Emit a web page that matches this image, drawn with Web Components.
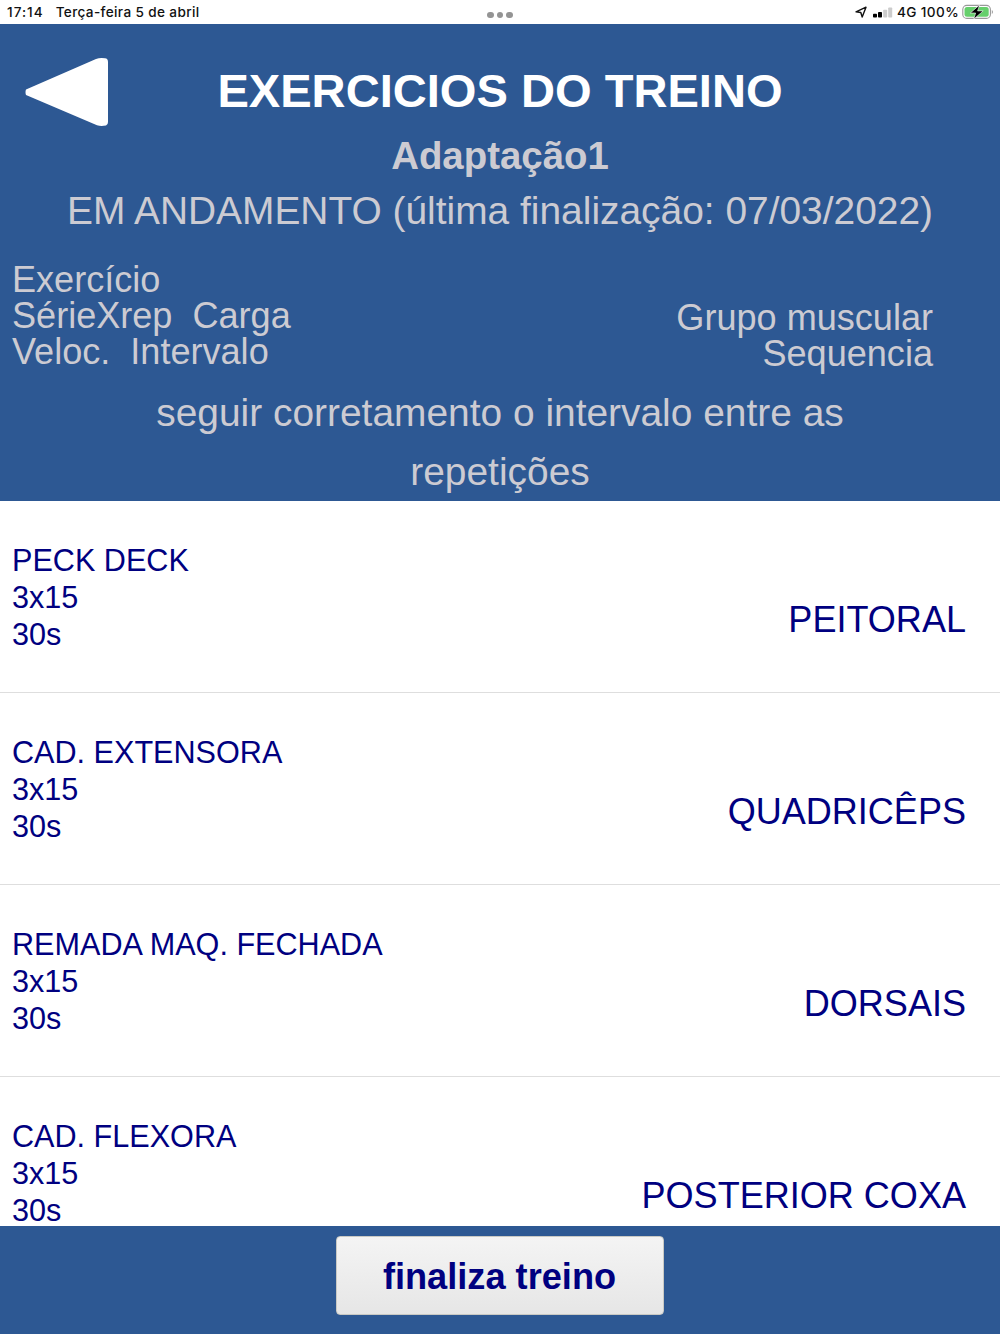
<!DOCTYPE html>
<html lang="pt-BR">
<head>
  <meta charset="UTF-8">
  <title>Exercicios do treino</title>
  <style>
    body {
      margin: 0;
      height: 1334px;
      overflow: hidden;
      background: #fff;
      font-family: "Liberation Sans", Arial, sans-serif;
    }
  </style>
</head>
<body>
  <treino-app></treino-app>

  <script>
    // Cria o shadow DOM a partir de uma string
    function render(el, html) {
      const template = document.createElement('template');
      template.innerHTML = html;
      el.attachShadow({ mode: 'open' });
      el.shadowRoot.appendChild(template.content.cloneNode(true));
    }

    class StatusBar extends HTMLElement {
      constructor() {
        super();
        render(this, `
          <style>
            :host {
              display: grid;
              grid-template-columns: 1fr auto 1fr;
              align-items: center;
              box-sizing: border-box;
              height: 24px;
              padding: 0 7px;
              background: #fff;
              color: #111;
              font: 500 13.6px/24px Inter, sans-serif;
              letter-spacing: .36px;
            }
            .left, .right, .dots { display: flex; align-items: center; }
            .left { gap: 12px; }
            .hora { letter-spacing: 1px; }
            .right { justify-content: flex-end; }
            .dots { gap: 3.4px; padding-top: 6px; }
            .dots i { width: 6.2px; height: 6.2px; border-radius: 50%; background: #949494; }
            .net { margin-left: 4px; }
            .pct { margin: 0 3px 0 4px; }
            svg { display: block; }
            .battery { margin-right: -1px; }
          </style>
          <div class="left"><span class="hora">17:14</span><span>Terça-feira 5 de abril</span></div>
          <div class="dots"><i></i><i></i><i></i></div>
          <div class="right">
            <svg width="12" height="12" viewBox="0 0 12 12"><path d="M1 5.9 11 1.2 7.2 11 5.8 6.5Z" fill="none" stroke="#111" stroke-width="1.4" stroke-linejoin="round"/></svg>
            <svg width="21" height="12" viewBox="0 0 21 12" style="margin-left:5px">
              <rect x="1" y="7.8" width="4" height="3.7" rx=".8" fill="#000"/>
              <rect x="6" y="6" width="4" height="5.5" rx=".8" fill="#000"/>
              <rect x="11.2" y="3.7" width="4" height="7.8" rx=".8" fill="#ccc"/>
              <rect x="16.2" y="1.5" width="4" height="10" rx=".8" fill="#ccc"/>
            </svg>
            <span class="net">4G</span>
            <span class="pct">100%</span>
            <svg class="battery" width="32" height="16" viewBox="0 0 32 16">
              <rect x=".8" y="1.4" width="27.6" height="13" rx="4" fill="#fff" stroke="#999" stroke-width="1.1"/>
              <rect x="2.5" y="3.1" width="24.2" height="9.6" rx="2.5" fill="#65cf6b"/>
              <path d="M29.8 6c1.5.6 1.5 3.4 0 4Z" fill="#999"/>
              <path d="M17.6 .9 8.3 9h5.3L11.8 15.1l9.4-8.2h-5.6Z" fill="#000" stroke="#fff" stroke-width=".6"/>
            </svg>
          </div>
        `);
      }
    }
    customElements.define('status-bar', StatusBar);

    class TreinoHeader extends HTMLElement {
      constructor() {
        super();
        render(this, `
          <style>
            :host {
              display: block;
              box-sizing: border-box;
              height: 477px;
              padding-top: 34px;
              background: #2d5893;
              color: #cccbd2;
              font-size: 38.9px;
              text-align: center;
            }
            .top {
              display: grid;
              grid-template-columns: 110px 1fr 110px;
              height: 70px;
            }
            .top svg { display: block; margin-left: 25px; }
            h1 {
              margin: 0;
              padding-top: 3px;
              color: #fff;
              font-size: 47.1px;
              line-height: 60px;
              white-space: nowrap;
            }
            .nome, .estado { line-height: 55px; white-space: nowrap; }
            .nome { font-weight: bold; font-size: 38.4px; }
            .legenda {
              display: flex;
              justify-content: space-between;
              height: 145px;
              box-sizing: border-box;
              padding: 24px 67px 0 12px;
              font-size: 36.1px;
              line-height: 36.2px;
              text-align: left;
              white-space: pre;
            }
            .legenda .dir { padding-top: 38px; text-align: right; }
            .obs { line-height: 59px; padding: 0 120px; }
          </style>
          <div class="top">
            <svg width="84" height="70" viewBox="0 0 84 70"><path d="M1 31.5 Q0 34 1 37 L72 67.3 Q76 68.5 81 67.5 Q83 67 83 64 V4 Q83 .5 80 .3 Q75 -.5 71 1 Z" fill="#fff"/></svg>
            <h1><slot name="titulo"></slot></h1>
          </div>
          <div class="nome"><slot name="nome"></slot></div>
          <div class="estado"><slot name="estado"></slot></div>
          <div class="legenda"><div>Exercício<br>SérieXrep  Carga<br>Veloc.  Intervalo</div><div class="dir">Grupo muscular<br>Sequencia</div></div>
          <div class="obs"><slot name="obs"></slot></div>
        `);
      }
    }
    customElements.define('treino-header', TreinoHeader);

    class ExercicioItem extends HTMLElement {
      constructor() {
        super();
        render(this, `
          <style>
            :host {
              display: flex;
              justify-content: space-between;
              box-sizing: border-box;
              height: 192px;
              padding: 41px 34px 0 12px;
              border-bottom: 1px solid #dedede;
              color: #000080;
              font-size: 30.6px;
              line-height: 37px;
              white-space: nowrap;
            }
            .grupo {
              padding-top: 60px;
              font-size: 36.05px;
              line-height: 36px;
            }
          </style>
          <div>
            <div><slot name="nome"></slot></div>
            <div><slot name="serie"></slot></div>
            <div><slot name="intervalo"></slot></div>
          </div>
          <div class="grupo"><slot name="grupo"></slot></div>
        `);
      }
    }
    customElements.define('exercicio-item', ExercicioItem);

    class TreinoFooter extends HTMLElement {
      constructor() {
        super();
        render(this, `
          <style>
            :host {
              display: flex;
              justify-content: center;
              align-items: flex-start;
              box-sizing: border-box;
              height: 108px;
              padding-top: 10px;
              background: #2d5893;
            }
            button {
              box-sizing: border-box;
              width: 328px;
              height: 79px;
              padding: 2px 1px 0 0;
              border: 1px solid #c9c9c4;
              border-radius: 4px;
              background: linear-gradient(#f4f4f4, #e6e6e6);
              color: #000080;
              font: bold 36.2px "Liberation Sans", Arial, sans-serif;
            }
          </style>
          <button><slot></slot></button>
        `);
      }
    }
    customElements.define('treino-footer', TreinoFooter);

    class TreinoApp extends HTMLElement {
      constructor() {
        super();
        const exercicios = [
          ['PECK DECK', '3x15', '30s', 'PEITORAL'],
          ['CAD. EXTENSORA', '3x15', '30s', 'QUADRICÊPS'],
          ['REMADA MAQ. FECHADA', '3x15', '30s', 'DORSAIS'],
          ['CAD. FLEXORA', '3x15', '30s', 'POSTERIOR COXA']
        ];
        render(this, `
          <style>
            :host { display: flex; flex-direction: column; height: 1334px; }
            status-bar, treino-header, treino-footer { flex: none; }
            .lista { flex: 1; min-height: 0; overflow: hidden; }
          </style>
          <status-bar></status-bar>
          <treino-header>
            <span slot="titulo">EXERCICIOS DO TREINO</span>
            <span slot="nome">Adaptação1</span>
            <span slot="estado">EM ANDAMENTO (última finalização: 07/03/2022)</span>
            <span slot="obs">seguir corretamento o intervalo entre as repetições</span>
          </treino-header>
          <div class="lista">
            ${exercicios.map(([nome, serie, intervalo, grupo]) => `
              <exercicio-item>
                <span slot="nome">${nome}</span>
                <span slot="serie">${serie}</span>
                <span slot="intervalo">${intervalo}</span>
                <span slot="grupo">${grupo}</span>
              </exercicio-item>
            `).join('')}
          </div>
          <treino-footer>finaliza treino</treino-footer>
        `);
      }
    }
    customElements.define('treino-app', TreinoApp);
  </script>
</body>
</html>
